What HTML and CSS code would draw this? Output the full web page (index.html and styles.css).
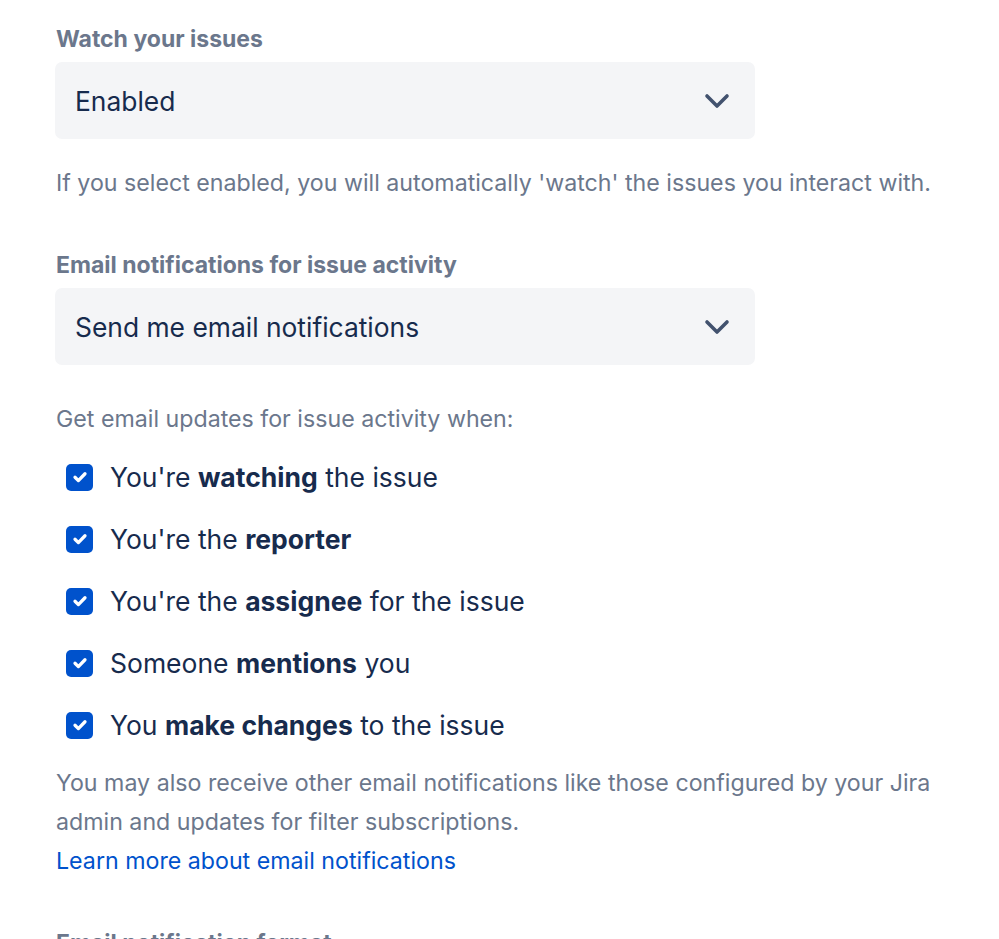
FILE: index.html
```html
<!DOCTYPE html>
<html>
<head>
<meta charset="utf-8">
<link rel="stylesheet" href="styles.css">
</head>
<body>
<div class="page">
  <div class="field">
    <div class="label">Watch your issues</div>
    <div class="select">
      <span class="select-value">Enabled</span>
      <svg class="chev" width="26" height="26" viewBox="0 0 26 26"><path d="M3 8l10 10 10-10" fill="none" stroke="#42526E" stroke-width="3.6" stroke-linecap="round" stroke-linejoin="round"/></svg>
    </div>
    <p class="help">If you select enabled, you will automatically 'watch' the issues you interact with.</p>
  </div>

  <div class="field">
    <div class="label">Email notifications for issue activity</div>
    <div class="select">
      <span class="select-value">Send me email notifications</span>
      <svg class="chev" width="26" height="26" viewBox="0 0 26 26"><path d="M3 8l10 10 10-10" fill="none" stroke="#42526E" stroke-width="3.6" stroke-linecap="round" stroke-linejoin="round"/></svg>
    </div>
    <p class="help intro">Get email updates for issue activity when:</p>
    <ul class="checks">
      <li><span class="box"><svg viewBox="0 0 16 16"><path d="M4 8.2l2.7 2.7L12 5.4" fill="none" stroke="#fff" stroke-width="2.6" stroke-linecap="round" stroke-linejoin="round"/></svg></span><span>You're <b>watching</b> the issue</span></li>
      <li><span class="box"><svg viewBox="0 0 16 16"><path d="M4 8.2l2.7 2.7L12 5.4" fill="none" stroke="#fff" stroke-width="2.6" stroke-linecap="round" stroke-linejoin="round"/></svg></span><span>You're the <b>reporter</b></span></li>
      <li><span class="box"><svg viewBox="0 0 16 16"><path d="M4 8.2l2.7 2.7L12 5.4" fill="none" stroke="#fff" stroke-width="2.6" stroke-linecap="round" stroke-linejoin="round"/></svg></span><span>You're the <b>assignee</b> for the issue</span></li>
      <li><span class="box"><svg viewBox="0 0 16 16"><path d="M4 8.2l2.7 2.7L12 5.4" fill="none" stroke="#fff" stroke-width="2.6" stroke-linecap="round" stroke-linejoin="round"/></svg></span><span>Someone <b>mentions</b> you</span></li>
      <li><span class="box"><svg viewBox="0 0 16 16"><path d="M4 8.2l2.7 2.7L12 5.4" fill="none" stroke="#fff" stroke-width="2.6" stroke-linecap="round" stroke-linejoin="round"/></svg></span><span>You <b>make changes</b> to the issue</span></li>
    </ul>
    <p class="help note">You may also receive other email notifications like those configured by your Jira admin and updates for filter subscriptions.<br><a href="#" class="link">Learn more about email notifications</a></p>
  </div>

  <div class="field">
    <div class="label">Email notification format</div>
  </div>
</div>
</body>
</html>
```

FILE: styles.css
```css
html, body {
  margin: 0;
  padding: 0;
  background: #fff;
}
body {
  font-family: Inter, "Noto Sans", "Liberation Sans", sans-serif;
  color: #172B4D;
  overflow: hidden;
  height: 939px;
}
.page {
  padding: 25px 0 0 56px;
  width: 900px;
}
.field {
  margin-bottom: 48px;
}
.label {
  font-size: 23px;
  font-weight: 700;
  color: #6B778C;
  line-height: 28px;
  margin-bottom: 9px;
}
.select {
  box-sizing: border-box;
  width: 700px;
  height: 77px;
  margin-left: -1px;
  background: #F4F5F7;
  border-radius: 7px;
  display: flex;
  align-items: center;
  justify-content: space-between;
  padding: 0 25px 0 20px;
}
.select-value {
  font-size: 26.4px;
  color: #172B4D;
}
.chev {
  display: block;
}
.help {
  margin: 0;
  font-size: 23.2px;
  line-height: 39px;
  color: #6B778C;
  margin-top: 25px;
}
.intro {
  margin-top: 35px;
}
.checks {
  list-style: none;
  margin: 7px 0 0 0;
  padding: 0;
}
.checks li {
  display: flex;
  align-items: center;
  height: 62px;
  font-size: 26.5px;
  color: #172B4D;
}
.checks b {
  font-weight: 700;
}
.box {
  width: 27px;
  height: 27px;
  border-radius: 5px;
  background: #0052CC;
  margin-left: 10px;
  margin-right: 17px;
  display: flex;
  align-items: center;
  justify-content: center;
  flex-shrink: 0;
}
.box svg {
  width: 20px;
  height: 20px;
  display: block;
}
.note {
  margin-top: 8px;
}
.link {
  color: #0052CC;
  text-decoration: none;
}
```
